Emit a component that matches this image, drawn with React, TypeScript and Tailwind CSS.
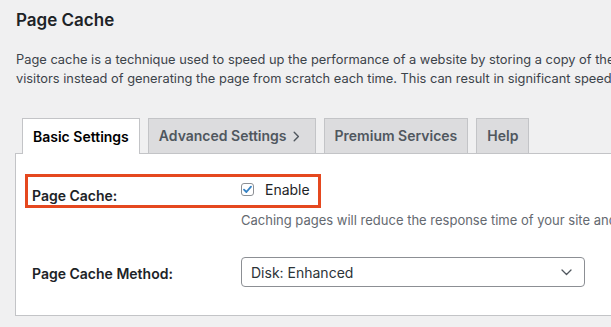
import React from "react";

const Chevron = () => (
  <svg width="12" height="11" viewBox="0 0 12 11" className="ml-[6px] mt-px" fill="none">
    <path d="M1.2 1.2 L5.4 5.5 L1.2 9.8" stroke="#50575e" strokeWidth="1.4" strokeLinecap="round" strokeLinejoin="round" />
  </svg>
);

export default function App() {
  const tabBase =
    "h-[35px] px-[10px] border border-b-0 border-[#c3c4c7] flex items-center text-[14px] font-semibold leading-[24px] whitespace-nowrap";
  return (
    <div className="w-[611px] h-[327px] overflow-hidden bg-[#f0f0f1] font-['Inter','Noto_Sans',sans-serif] text-[#3c434a]">
      <div className="w-[1000px] pl-[15px] pt-[8px]">
        <h2 className="ml-px text-[17px] leading-[24px] font-semibold text-[#1d2327]">Page Cache</h2>
        <div className="ml-px mt-[19px] text-[12.85px] leading-[18.5px] text-[#3c434a]">
          <div className="whitespace-nowrap">
            Page cache is a technique used to speed up the performance of a website by storing a copy of the generated page
          </div>
          <div className="whitespace-nowrap">
            visitors instead of generating the page from scratch each time. This can result in significant speed improvements.
          </div>
        </div>
        <div className="mt-[30px] ml-[7px] flex gap-[8px] text-[#50575e]">
          <div className={`${tabBase} bg-white text-black relative z-10 h-[36px] -mb-px`}>Basic Settings</div>
          <div className={`${tabBase} bg-[#dcdcde]`}>
            Advanced Settings
            <Chevron />
          </div>
          <div className={`${tabBase} bg-[#dcdcde]`}>Premium Services</div>
          <div className={`${tabBase} bg-[#dcdcde]`}>Help</div>
        </div>
        <div className="relative w-[900px] h-[163px] bg-white border border-[#c3c4c7]">
          <div className="absolute left-[9px] top-[20px] w-[296px] h-[34px] border-[3px] border-[#e5481f]" />
          <div className="grid grid-cols-[209px_1fr] pl-[16px]">
            <div className="pt-[32px] text-[14px] leading-[20px] font-semibold text-[#1d2327]">Page Cache:</div>
            <div className="pt-[25px]">
              <div className="flex items-center h-[20px] text-[14px] text-[#1d2327]">
                <span className="w-[13px] h-[13px] rounded-[3px] border border-[#8c8f94] bg-white flex items-center justify-center mr-[11px]">
                  <svg width="11" height="11" viewBox="0 0 11 11" fill="none">
                    <path d="M2 5.6 L4.4 8 L9 2.6" stroke="#3582c4" strokeWidth="1.8" strokeLinecap="round" strokeLinejoin="round" />
                  </svg>
                </span>
                Enable
              </div>
              <div className="mt-[12px] text-[13px] leading-[18px] text-[#646970] whitespace-nowrap">
                Caching pages will reduce the response time of your site and improve the web server throughput.
              </div>
            </div>
            <div className="pt-[30px] text-[14px] leading-[20px] font-semibold text-[#1d2327] self-start mt-[5px]">Page Cache Method:</div>
            <div className="pt-[30px]">
              <div className="-mt-[2px] w-[344px] h-[30px] border border-[#8c8f94] rounded-[4px] flex items-center justify-between pl-[9px] pr-[12px] text-[14px] text-[#2c3338]">
                <span>Disk: Enhanced</span>
                <svg width="11" height="7" viewBox="0 0 11 7" fill="none">
                  <path d="M1 1 L5.5 5.5 L10 1" stroke="#50575e" strokeWidth="1.3" strokeLinecap="round" strokeLinejoin="round" />
                </svg>
              </div>
            </div>
          </div>
        </div>
      </div>
    </div>
  );
}
